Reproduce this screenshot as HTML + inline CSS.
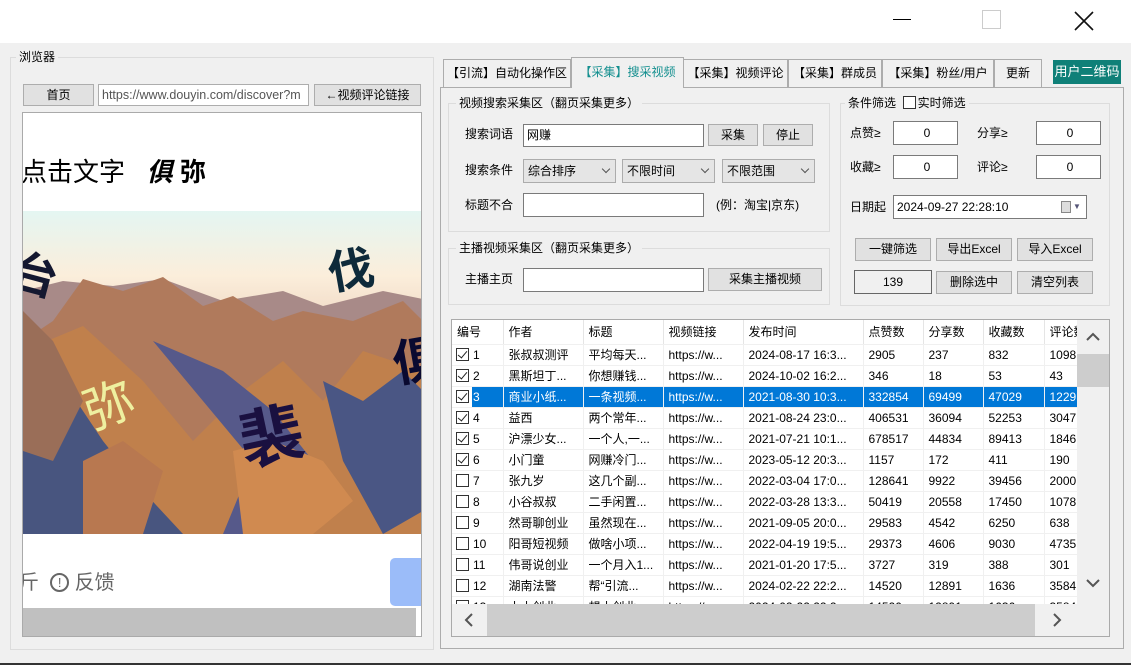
<!DOCTYPE html>
<html><head><meta charset="utf-8">
<style>
*{margin:0;padding:0;box-sizing:border-box}
body{width:1131px;height:665px;overflow:hidden;background:#f0f0f0;position:relative;font-family:"Liberation Sans","Noto Sans CJK SC",sans-serif;font-size:12px;color:#000}
.a{position:absolute}
.t{position:absolute;white-space:nowrap;line-height:14px}
.btn{position:absolute;background:#e1e1e1;border:1px solid #adadad;text-align:center;white-space:nowrap}
.inp{position:absolute;background:#fff;border:1px solid #7a7a7a;white-space:nowrap;padding-left:3px}
.grp{position:absolute;border:1px solid #dcdcdc}
.gl{position:absolute;background:#f0f0f0;padding:0 3px;white-space:nowrap;line-height:14px}
.cmb{position:absolute;background:#e5e5e5;border:1px solid #acacac;padding-left:4px;white-space:nowrap}
.cmb:after{content:"";position:absolute;right:6px;top:6px;width:5px;height:5px;border-right:1px solid #555;border-bottom:1px solid #555;transform:rotate(45deg)}
.tab{position:absolute;top:59px;height:28px;border:1px solid #acacac;border-bottom:none;background:#f0f0f0;text-align:center;line-height:27px;white-space:nowrap}
table{border-collapse:collapse;position:absolute;left:452px;top:320px;table-layout:fixed}
td{height:21px;border-right:1px solid #f0f0f0;border-bottom:1px solid #f0f0f0;padding-left:5px;white-space:nowrap;overflow:hidden;background:#fff;line-height:20px}
tr.h td{height:24px;border-right:1px solid #e5e5e5}
tr.s td{background:#0078d7;color:#fff}
.cb{display:inline-block;width:13px;height:13px;border:1px solid #333;vertical-align:-2px;margin-right:4px;background:#fff;position:relative}
.cb.c:after{content:"";position:absolute;left:3px;top:0px;width:4px;height:8px;border-right:1.5px solid #222;border-bottom:1.5px solid #222;transform:rotate(40deg)}
</style></head><body>
<div class="a" style="left:0;top:0;width:1131px;height:43px;background:#fff"></div>
<div class="a" style="left:893px;top:19px;width:18px;height:1px;background:#000"></div>
<div class="a" style="left:982px;top:10px;width:19px;height:19px;border:1px solid #ccc"></div>
<svg class="a" style="left:1073px;top:10px" width="22" height="22"><path d="M2 2L20 20M20 2L2 20" stroke="#111" stroke-width="1.6"/></svg>
<div class="a" style="left:0;top:663px;width:1131px;height:2px;background:#333"></div>

<div class="grp" style="left:10px;top:57px;width:424px;height:593px"></div>
<div class="gl" style="left:16px;top:50px">浏览器</div>
<div class="btn" style="left:23px;top:84px;width:71px;height:22px;line-height:20px">首页</div>
<div class="inp" style="left:98px;top:84px;width:211px;height:22px;line-height:20px;color:#555;border-color:#adadad;overflow:hidden;font-size:12.5px">https://www.douyin.com/discover?m</div>
<div class="btn" style="left:314px;top:84px;width:107px;height:22px;line-height:20px">←视频评论链接</div>
<div class="a" style="left:22px;top:112px;width:400px;height:525px;background:#fff;border:1px solid #aaa;overflow:hidden">
  <div class="t" style="left:-2px;top:44px;font-size:26px;line-height:30px">点击文字 &nbsp;&nbsp;<b style="font-style:italic">俱</b> <b>弥</b></div>
  <svg class="a" style="left:0;top:98px" width="400" height="323">
    <defs><linearGradient id="sk" x1="0" y1="0" x2="0" y2="1"><stop offset="0" stop-color="#e4f6f2"/><stop offset="0.2" stop-color="#fbeedb"/><stop offset="0.35" stop-color="#f0d8c4"/><stop offset="1" stop-color="#c9a890"/></linearGradient></defs>
    <rect width="400" height="323" fill="url(#sk)"/>
    <polygon points="0,80 40,70 90,75 140,68 200,90 260,80 300,95 360,80 400,88 400,323 0,323" fill="#a88a88"/>
    <polygon points="30,110 60,68 100,80 140,66 180,95 210,85 250,110 280,100 330,110 380,90 400,110 400,323 0,323 0,130" fill="#b07a5c"/>
    <polygon points="0,140 60,115 120,170 170,230 220,180 260,150 300,190 340,140 400,160 400,323 0,323" fill="#c0804c"/>
    <polygon points="0,190 40,170 80,230 120,280 160,323 0,323" fill="#48557f"/>
    <polygon points="130,130 180,190 230,250 200,323 260,323 290,250 250,200 200,160" fill="#56598a"/>
    <polygon points="300,170 340,190 380,160 400,180 400,300 360,323 320,250" fill="#4a5684"/>
    <polygon points="210,240 250,230 300,250 330,290 290,323 220,323" fill="#d08a50"/>
    <polygon points="60,250 100,230 140,260 120,323 60,323" fill="#b87850"/>
    <polygon points="0,100 30,130 60,190 30,250 0,240" fill="#9a6e58"/>
    <text x="-10" y="80" font-size="46" font-weight="bold" fill="#141830" transform="rotate(15 10 60)" font-family="Noto Sans CJK SC">台</text>
    <text x="305" y="75" font-size="46" font-weight="bold" fill="#0e2a3a" transform="rotate(-10 330 60)" font-family="Noto Sans CJK SC">伐</text>
    <text x="60" y="210" font-size="50" fill="#eef0a0" transform="rotate(-20 90 190)" font-family="Noto Sans CJK SC">弥</text>
    <text x="215" y="250" font-size="64" font-weight="bold" fill="#1a1040" transform="rotate(-12 240 220)" font-family="Noto Sans CJK SC">裴</text>
    <text x="370" y="170" font-size="50" font-weight="bold" fill="#0a0a30" transform="rotate(-10 380 150)" font-family="Noto Sans CJK SC">俱</text>
  </svg>
  <div class="t" style="left:-4px;top:458px;font-size:20px;line-height:24px;color:#666">斤 &nbsp;<span style="display:inline-block;width:19px;height:19px;border:2px solid #666;border-radius:50%;font-size:13px;line-height:15px;text-align:center;vertical-align:2px">!</span> 反馈</div>
  <div class="a" style="left:367px;top:445px;width:40px;height:48px;background:#9bbcf9;border-radius:5px"></div>
  <div class="a" style="left:0;top:495px;width:393px;height:28px;background:#c0c0c0"></div>
</div>

<div class="a" style="left:440px;top:87px;width:684px;height:562px;border:1px solid #acacac;background:#f0f0f0"></div>
<div class="tab" style="left:443px;width:128px">【引流】自动化操作区</div>
<div class="tab" style="left:683px;width:105px">【采集】视频评论</div>
<div class="tab" style="left:788px;width:94px">【采集】群成员</div>
<div class="tab" style="left:882px;width:112px">【采集】粉丝/用户</div>
<div class="tab" style="left:994px;width:48px">更新</div>
<div class="tab" style="left:571px;top:57px;width:113px;height:31px;color:#138f8f;line-height:29px;background:#f0f0f0;z-index:2">【采集】搜采视频</div>
<div class="a" style="left:1053px;top:60px;width:68px;height:24px;background:#0f8078;color:#fff;text-align:center;line-height:23px;font-size:13px">用户二维码</div>

<div class="grp" style="left:448px;top:103px;width:382px;height:129px"></div>
<div class="gl" style="left:456px;top:96px">视频搜索采集区（翻页采集更多）</div>
<div class="t" style="left:465px;top:127px">搜索词语</div>
<div class="inp" style="left:523px;top:124px;width:181px;height:23px;line-height:21px">网赚</div>
<div class="btn" style="left:708px;top:124px;width:50px;height:22px;line-height:20px">采集</div>
<div class="btn" style="left:763px;top:124px;width:50px;height:22px;line-height:20px">停止</div>
<div class="t" style="left:465px;top:163px">搜索条件</div>
<div class="cmb" style="left:523px;top:159px;width:93px;height:24px;line-height:22px">综合排序</div>
<div class="cmb" style="left:622px;top:159px;width:93px;height:24px;line-height:22px">不限时间</div>
<div class="cmb" style="left:722px;top:159px;width:93px;height:24px;line-height:22px">不限范围</div>
<div class="t" style="left:465px;top:198px">标题不合</div>
<div class="inp" style="left:523px;top:193px;width:181px;height:24px"></div>
<div class="t" style="left:716px;top:198px">(例：淘宝|京东)</div>

<div class="grp" style="left:448px;top:248px;width:382px;height:57px"></div>
<div class="gl" style="left:456px;top:241px">主播视频采集区（翻页采集更多）</div>
<div class="t" style="left:465px;top:272px">主播主页</div>
<div class="inp" style="left:523px;top:268px;width:181px;height:24px"></div>
<div class="btn" style="left:708px;top:268px;width:114px;height:23px;line-height:21px">采集主播视频</div>

<div class="grp" style="left:840px;top:103px;width:270px;height:203px"></div>
<div class="gl" style="left:845px;top:96px">条件筛选 &nbsp;<span class="cb" style="margin-right:2px"></span>实时筛选</div>
<div class="t" style="left:850px;top:126px">点赞≥</div>
<div class="inp" style="left:893px;top:121px;width:65px;height:24px;line-height:22px;text-align:center">0</div>
<div class="t" style="left:977px;top:126px">分享≥</div>
<div class="inp" style="left:1036px;top:121px;width:65px;height:24px;line-height:22px;text-align:center">0</div>
<div class="t" style="left:850px;top:160px">收藏≥</div>
<div class="inp" style="left:893px;top:155px;width:65px;height:24px;line-height:22px;text-align:center">0</div>
<div class="t" style="left:977px;top:160px">评论≥</div>
<div class="inp" style="left:1036px;top:155px;width:65px;height:24px;line-height:22px;text-align:center">0</div>
<div class="t" style="left:850px;top:200px">日期起</div>
<div class="inp" style="left:893px;top:195px;width:194px;height:24px;line-height:22px">2024-09-27 22:28:10<span class="a" style="left:167px;top:5px;width:10px;height:12px;border:1px solid #888;background:#ddd"></span><span class="a" style="left:179px;top:0;color:#557;font-size:8px">▼</span></div>
<div class="btn" style="left:855px;top:238px;width:76px;height:23px;line-height:21px">一键筛选</div>
<div class="btn" style="left:936px;top:238px;width:76px;height:23px;line-height:21px">导出Excel</div>
<div class="btn" style="left:1017px;top:238px;width:76px;height:23px;line-height:21px">导入Excel</div>
<div class="a" style="left:854px;top:270px;width:78px;height:24px;border:1px solid #666;text-align:center;line-height:22px">139</div>
<div class="btn" style="left:936px;top:271px;width:76px;height:23px;line-height:21px">删除选中</div>
<div class="btn" style="left:1017px;top:271px;width:76px;height:23px;line-height:21px">清空列表</div>

<div class="a" style="left:451px;top:319px;width:659px;height:318px;border:1px solid #aaa;background:#fff;overflow:hidden">
<table style="left:0;top:0">
<colgroup><col style="width:51px"><col style="width:80px"><col style="width:80px"><col style="width:80px"><col style="width:120px"><col style="width:60px"><col style="width:60px"><col style="width:61px"><col style="width:40px"></colgroup>
<tr class="h"><td>编号</td><td>作者</td><td>标题</td><td>视频链接</td><td>发布时间</td><td>点赞数</td><td>分享数</td><td>收藏数</td><td>评论数</td></tr>
<tr><td style="padding-left:4px"><span class="cb c"></span>1</td><td>张叔叔测评</td><td>平均每天...</td><td>https://w...</td><td>2024-08-17 16:3...</td><td>2905</td><td>237</td><td>832</td><td>1098</td></tr>
<tr><td style="padding-left:4px"><span class="cb c"></span>2</td><td>黑斯坦丁...</td><td>你想赚钱...</td><td>https://w...</td><td>2024-10-02 16:2...</td><td>346</td><td>18</td><td>53</td><td>43</td></tr>
<tr class="s"><td style="padding-left:4px;background:linear-gradient(90deg,#fff 20px,#0078d7 20px)"><span class="cb c"></span>3</td><td>商业小纸...</td><td>一条视频...</td><td>https://w...</td><td>2021-08-30 10:3...</td><td>332854</td><td>69499</td><td>47029</td><td>1229</td></tr>
<tr><td style="padding-left:4px"><span class="cb c"></span>4</td><td>益西</td><td>两个常年...</td><td>https://w...</td><td>2021-08-24 23:0...</td><td>406531</td><td>36094</td><td>52253</td><td>3047</td></tr>
<tr><td style="padding-left:4px"><span class="cb c"></span>5</td><td>沪漂少女...</td><td>一个人,一...</td><td>https://w...</td><td>2021-07-21 10:1...</td><td>678517</td><td>44834</td><td>89413</td><td>1846</td></tr>
<tr><td style="padding-left:4px"><span class="cb c"></span>6</td><td>小门童</td><td>网赚冷门...</td><td>https://w...</td><td>2023-05-12 20:3...</td><td>1157</td><td>172</td><td>411</td><td>190</td></tr>
<tr><td style="padding-left:4px"><span class="cb"></span>7</td><td>张九岁</td><td>这几个副...</td><td>https://w...</td><td>2022-03-04 17:0...</td><td>128641</td><td>9922</td><td>39456</td><td>2000</td></tr>
<tr><td style="padding-left:4px"><span class="cb"></span>8</td><td>小谷叔叔</td><td>二手闲置...</td><td>https://w...</td><td>2022-03-28 13:3...</td><td>50419</td><td>20558</td><td>17450</td><td>1078</td></tr>
<tr><td style="padding-left:4px"><span class="cb"></span>9</td><td>然哥聊创业</td><td>虽然现在...</td><td>https://w...</td><td>2021-09-05 20:0...</td><td>29583</td><td>4542</td><td>6250</td><td>638</td></tr>
<tr><td style="padding-left:4px"><span class="cb"></span>10</td><td>阳哥短视频</td><td>做啥小项...</td><td>https://w...</td><td>2022-04-19 19:5...</td><td>29373</td><td>4606</td><td>9030</td><td>4735</td></tr>
<tr><td style="padding-left:4px"><span class="cb"></span>11</td><td>伟哥说创业</td><td>一个月入1...</td><td>https://w...</td><td>2021-01-20 17:5...</td><td>3727</td><td>319</td><td>388</td><td>301</td></tr>
<tr><td style="padding-left:4px"><span class="cb"></span>12</td><td>湖南法警</td><td>帮“引流...</td><td>https://w...</td><td>2024-02-22 22:2...</td><td>14520</td><td>12891</td><td>1636</td><td>3584</td></tr>
<tr><td style="padding-left:4px"><span class="cb"></span>13</td><td>小小创业</td><td>想小创业...</td><td>https://w...</td><td>2024-02-22 22:2...</td><td>14520</td><td>12891</td><td>1636</td><td>3584</td></tr>
</table>
<div class="a" style="left:625px;top:0;width:32px;height:284px;background:#f0f0f0"></div>
<div class="a" style="left:625px;top:34px;width:32px;height:33px;background:#cdcdcd"></div>
<svg class="a" style="left:634px;top:12px" width="14" height="10"><path d="M1 8L7 2L13 8" stroke="#555" stroke-width="2" fill="none"/></svg>
<svg class="a" style="left:634px;top:258px" width="14" height="10"><path d="M1 2L7 8L13 2" stroke="#555" stroke-width="2" fill="none"/></svg>
<div class="a" style="left:0;top:284px;width:659px;height:33px;background:#f0f0f0"></div>
<div class="a" style="left:35px;top:284px;width:548px;height:32px;background:#cdcdcd"></div>
<svg class="a" style="left:12px;top:293px" width="10" height="14"><path d="M8 1L2 7L8 13" stroke="#555" stroke-width="2" fill="none"/></svg>
<svg class="a" style="left:600px;top:293px" width="10" height="14"><path d="M2 1L8 7L2 13" stroke="#555" stroke-width="2" fill="none"/></svg>
</div>
</body></html>
